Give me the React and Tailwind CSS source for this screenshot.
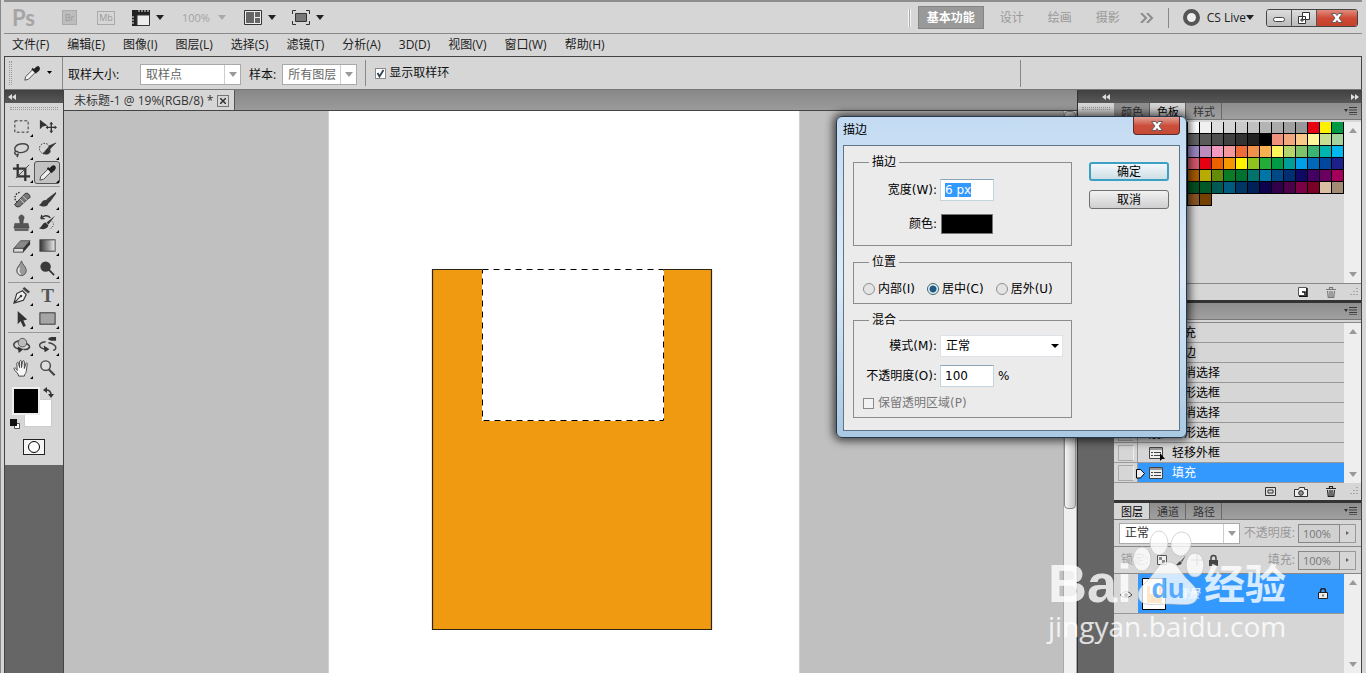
import { useEffect, useRef, useState } from 'react';

const MENUS = ['文件(F)', '编辑(E)', '图像(I)', '图层(L)', '选择(S)', '滤镜(T)', '分析(A)', '3D(D)', '视图(V)', '窗口(W)', '帮助(H)'];

const SWATCHES = [
  '#e60012', '#fff100', '#009944', '#00a0e9', '#1d2088', '#e4007f', '#ffffff', '#f0f0f0', '#dedede', '#d4d4d4', '#cacaca', '#c0c0c0', '#b4b4b4', '#aaaaaa', '#a0a0a0', '#989898', '#e60012', '#fff100', '#009944',
  '#00a0e9', '#1d2088', '#e4007f', '#898989', '#7d7d7d', '#707070', '#626262', '#5a5a5a', '#4e4e4e', '#404040', '#323232', '#222222', '#000000', '#f0917b', '#f3a77c', '#fac98a', '#fff799', '#c5de92', '#a3d39c',
  '#7accc8', '#6dcff6', '#7da7d9', '#8393ca', '#8781bd', '#a186be', '#9b86c0', '#bd8cbf', '#f49ac1', '#f5989d', '#ee6b3a', '#f0914c', '#f9b050', '#fff45c', '#b2d66b', '#80c269', '#3bb371', '#00b5b0', '#00b7ee',
  '#448aca', '#556fb5', '#5f52a0', '#8957a1', '#ae5da1', '#ea68a2', '#d2566b', '#e60012', '#eb6100', '#f39800', '#fff100', '#8fc31f', '#22ac38', '#009944', '#009e96', '#00a0e9', '#0068b7', '#00479d', '#1d2088',
  '#601986', '#920783', '#be0081', '#e4007f', '#e5004f', '#a40000', '#a35a00', '#b7aa00', '#638c0b', '#097c25', '#007130', '#00736d', '#0075a9', '#004986', '#002e73', '#100964', '#440062', '#6a005f', '#a4005b',
  '#a40035', '#7d0000', '#7d3a00', '#7f7200', '#48660a', '#005e15', '#005120', '#005826', '#005952', '#005b7f', '#003663', '#002157', '#0d004c', '#32004b', '#4b0049', '#7b0046', '#7a0026', '#d9c0a3', '#a38a75',
  '#8a7260', '#7a6355', '#c69c6d', '#a67c52', '#8c6239', '#7b5a2e', '#8a5520', '#754100',
];

const HISTORY = ['填充', '描边', '取消选择', '矩形选框', '取消选择', '矩形选框', '轻移外框', '填充'];

const TOOL_GROUPS = [
  [
    ['矩形选框工具', <rect x="3" y="4" width="14" height="12" fill="none" stroke="#333" strokeDasharray="3 2" />],
    ['移动工具', <><path d="M2 3v10l3-3 5-1z" fill="#333" /><path d="M14 6v10M9 11h10" stroke="#333" strokeWidth="1.4" /><path d="M14 5l2 2.500h-4zM14 17l2-2.500h-4zM8 11l2.500-2v4zM20 11l-2.500-2v4z" fill="#333" /></>],
    ['套索工具', <path d="M4 12c-3-4 1-8 7-8 5 0 7 2 6 5s-6 5-10 4c-2-1-3-2-4 0s2 3 3 2 0 2-1 3" fill="none" stroke="#444" strokeWidth="1.500" />],
    ['快速选择工具', <><circle cx="7" cy="9" r="5.500" fill="none" stroke="#222" strokeDasharray="1.500 1.500" /><path d="M19 3l-7 7-2-1 2-3zM11 9c-3 0-3 4-6 5 4 2 8 1 8-3z" fill="#333" stroke="#333" strokeWidth=".6" /></>],
    ['裁剪工具', <><path d="M6 1v13h13M1 6h13v13" fill="none" stroke="#333" strokeWidth="2.400" /><path d="M4 16L18 2" stroke="#444" /></>],
    ['吸管工具', 'dropper'],
  ],
  [
    ['修复画笔工具', <><path d="M8 2.500a6 6 0 0 0-2 11" fill="none" stroke="#222" strokeDasharray="1.500 1.500" strokeWidth="1.400" /><path d="M4 14L14 3.500q3-1 4.500 2T17 9L8 17.500q-3 1-4.500-1T4 14z" fill="#777" stroke="#333" /><path d="M8 9l5 5M11 6l5 5" stroke="#ccc" /></>],
    ['画笔工具', <path d="M19 2l-9 7-2 2 3 3 2-2 6-8zM8 10.500c-4 0-4 4-7 5.500 5 2.500 10 1.500 10-2.500z" fill="#3a3a3a" />],
    ['仿制图章工具', <path d="M10 2a3 3 0 0 1 2 5l-.500 4H17l1 5H2l1-5h5.500L8 7a3 3 0 0 1 2-5zM3 17h14v1.500H3z" fill="#555" stroke="#333" strokeWidth=".5" />],
    ['历史记录画笔工具', <><path d="M3 6c3-4 7-4 10-1M3 6l1-4M3 6l4 0" fill="none" stroke="#333" strokeWidth="1.400" /><path d="M18 3l-9 7 2 2zM8 10c-3 0-4 5-7 6 5 2 9 1 10-3z" fill="#333" /><path d="M15 9c3 3 0 7-3 8" fill="none" stroke="#333" strokeDasharray="1 1.500" /></>],
    ['橡皮擦工具', <><path d="M2 13L9 5h10l-7 8z" fill="#888" stroke="#555" /><path d="M2 13h10v4H1.500z" fill="#ddd" stroke="#444" /><path d="M12 13l7-8v4l-7 8z" fill="#333" /></>],
    ['渐变工具', <><defs><linearGradient id="gradTool"><stop offset="0" stopColor="#333" /><stop offset="1" stopColor="#eee" /></linearGradient></defs><rect x="2" y="4" width="16" height="12" fill="url(#gradTool)" stroke="#444" /></>],
    ['模糊工具', <><path d="M10 2c1 4 5 6 5 10a5 5.500 0 0 1-10 0c0-4 4-6 5-10z" fill="#999" stroke="#555" /><path d="M8 9c-2 3-1 6 1 7" fill="none" stroke="#eee" strokeWidth="1.500" /></>],
    ['加深工具', <><circle cx="8" cy="8" r="5.500" fill="#3a3a3a" /><path d="M11 11l6 6" stroke="#333" strokeWidth="1.800" /></>],
  ],
  [
    ['钢笔工具', <><path d="M2 18L5 8l6-3 4 4-3 6zM2 18l7-7" fill="#eee" stroke="#333" strokeWidth="1.200" /><path d="M11 3l6 5 2-2-6-5z" fill="#444" /><circle cx="9.500" cy="10.500" r="1.300" fill="#333" /></>],
    ['文字工具', <text x="10" y="17" textAnchor="middle" fontFamily="Liberation Serif" fontWeight="bold" fontSize="20" fill="#555">T</text>],
    ['路径选择工具', <path d="M6 2v14l3-3 3 6 2.500-1.500L12 12l4-1z" fill="#333" />],
    ['矩形工具', <rect x="2" y="4" width="16" height="12" fill="#a5a5a5" stroke="#333" />],
  ],
  [
    ['3D 旋转工具', <><circle cx="11" cy="7" r="4.500" fill="#bbb" stroke="#555" /><path d="M7 5c-8 2-6 8 2 9M15 8c7 3 2 7-3 6" fill="none" stroke="#444" strokeWidth="1.700" /><path d="M6 11l6 3-5 4z" fill="#333" /></>],
    ['3D 相机工具', <><path d="M14 1h5v4h-5l-3-1V2z" fill="#333" /><path d="M8 6C-1 7 0 13 9 14M11 7c8 1 10 7 5 8" fill="none" stroke="#444" strokeWidth="1.600" /><path d="M6 10l6 4-5 3z" fill="#333" /></>],
    ['抓手工具', <path d="M6 18c0-3-4-5-5-8 1-1.500 2-.500 3.500 2L4 5c0-2 2-2 2 0l1 4V3c0-2 2-2 2 0v6l1-6c.500-2 2-1.500 2 0v7l1.500-5c.500-1.500 2-1 1.500 1l-1 7c0 2-2 3-2 5z" fill="#f5f5f5" stroke="#444" transform="translate(1 0)" />],
    ['缩放工具', <><circle cx="8" cy="7" r="5" fill="#ddd" stroke="#444" strokeWidth="1.500" /><path d="M11.500 11l6 6" stroke="#444" strokeWidth="2.200" /></>],
  ],
];

function Dropper() {
  return (
    <>
      <path d="M2 18l1-4 8-8 3 3-8 8z" fill="#f0f0f0" stroke="#444" />
      <path d="M10 5l5 5M12 7l2.500-2.500q2-2 3-.500t-.500 3L14.500 9z" fill="#222" stroke="#222" strokeWidth="2" />
    </>
  );
}

function Caret({ className = 'text-[#222]' }) {
  return (
    <svg width="8" height="5" viewBox="0 0 8 5" className={className} aria-hidden="true">
      <path d="M0 0h8L4 5z" fill="currentColor" />
    </svg>
  );
}

function DoubleArrow({ flip }) {
  return (
    <svg width="8" height="6" viewBox="0 0 8 6" className={flip ? 'rotate-180' : ''} aria-hidden="true">
      <path d="M4 0v6L0 3zM8 0v6L4 3z" fill="#ddd" />
    </svg>
  );
}

function CloseGlyph() {
  return (
    <svg width="12" height="10" viewBox="0 0 12 10" aria-hidden="true">
      <path d="M0.500 0.500h4L6 2.500 7.500 0.500h4L8 5l3.500 4.500h-4L6 7.500l-1.500 2h-4L4 5z" fill="#fff" stroke="#555" strokeWidth=".9" />
    </svg>
  );
}

function AppBar() {
  return (
    <header className="flex h-[34px] shrink-0 items-center border-t-2 border-b border-t-[#8d8d8d] border-b-[#8a8a8a] pl-2 pr-1">
      <span className="w-[50px] font-['Lato'] text-[22px] font-bold leading-5 text-[#a5a5a5]">Ps</span>
      <button className="mr-5 h-[15px] w-[15px] border border-[#aaa] bg-[#bdbdbd] text-[9px] leading-3 text-[#999]">Br</button>
      <button className="mr-[17px] h-[14px] w-[18px] border border-[#aaa] text-[9px] leading-3 text-[#999]">Mb</button>
      <button className="mr-[18px] flex items-center gap-[6px]" aria-label="查看额外内容">
        <svg width="18" height="16" viewBox="0 0 18 16"><path d="M0 0h18v5H5v11H0z" fill="#222" /><path d="M5 5h12.500v10.500H5z" fill="#ececec" stroke="#333" /><path d="M7 0v2M10 0v2M13 0v2M16 0v2M0 7h2M0 10h2M0 13h2" stroke="#eee" /></svg>
        <Caret />
      </button>
      <button className="mr-[18px] flex items-center gap-2 text-[11px] text-[#a2a2a2]">100%<Caret className="text-[#aaa]" /></button>
      <button className="mr-[16px] flex items-center gap-[6px]" aria-label="排列文档">
        <svg width="18" height="15" viewBox="0 0 18 15"><path d="M.5.5h17v14H.5z" fill="#eee" stroke="#333" /><path d="M2 2h8v11H2zM11 2h5v5h-5zM11 8h5v5h-5z" fill="#666" /></svg>
        <Caret />
      </button>
      <button className="flex items-center gap-[6px]" aria-label="屏幕模式">
        <svg width="18" height="15" viewBox="0 0 18 15"><path d="M.5 4V.5H4M14 .5h3.500V4M17.500 11v3.500H14M4 14.500H.5V11" fill="none" stroke="#333" /><path d="M3.500 3.500h11v8h-11z" fill="#777" stroke="#333" /></svg>
        <Caret />
      </button>
      <div className="ml-auto mr-[7px] h-[18px] w-[3px] border-x border-[#f5f5f5] bg-[#aaa]" />
      <nav className="flex items-center gap-6 text-[12px] text-[#999]">
        <button className="-mr-2 h-[23px] border border-[#858585] bg-[#999] px-2 font-bold text-white">基本功能</button>
        <button>设计</button>
        <button>绘画</button>
        <button>摄影</button>
        <button className="-ml-1" aria-label="更多工作区">
          <svg width="14" height="10" viewBox="0 0 14 10"><path d="M1 0l5 5-5 5M7 0l5 5-5 5" fill="none" stroke="#8c8c8c" strokeWidth="2" /></svg>
        </button>
      </nav>
      <div className="ml-[14px] mr-[14px] h-5 w-px bg-[#888]" />
      <button className="mr-3 flex items-center text-[12px] text-[#222]">
        <svg width="17" height="17" viewBox="0 0 17 17" className="mr-[7px]"><circle cx="8.500" cy="8.500" r="6.500" fill="#eee" stroke="#555" strokeWidth="4" /></svg>
        <span>CS Live</span>
        <Caret />
      </button>
      <div className="flex h-[18px] overflow-hidden rounded-[3px] border border-[#444]">
        <button aria-label="最小化" className="flex w-[25px] items-center justify-center border-r border-[#555] bg-linear-to-b from-[#ddd] to-[#bbb]"><span className="mt-1 h-[5px] w-3 rounded-sm border border-[#444] bg-white" /></button>
        <button aria-label="还原" className="flex w-[25px] items-center justify-center border-r border-[#555] bg-linear-to-b from-[#ddd] to-[#bbb]">
          <svg width="12" height="12" viewBox="0 0 12 12"><path d="M4.500.5h7v7h-7zM.5 4.500h7v7h-7z" fill="#fff" stroke="#333" /><path d="M3 7h2v2H3z" fill="#ccc" stroke="#333" /></svg>
        </button>
        <button aria-label="关闭" className="flex w-10 items-center justify-center bg-linear-to-b from-[#e08a7c] via-[#cf4a36] to-[#c4412a]"><CloseGlyph /></button>
      </div>
    </header>
  );
}

function OptionsBar() {
  return (
    <section className="flex h-[34px] shrink-0 items-center border border-[#444] border-b-[#777] pl-1">
      <div className="h-6 w-[3px] border-x border-dotted border-[#999]" />
      <button className="ml-[11px] flex items-center gap-[6px]" aria-label="当前工具">
        <svg width="18" height="18" viewBox="0 0 20 20"><Dropper /></svg>
        <svg width="5" height="4" viewBox="0 0 5 4"><path d="M0 0h5L2.500 3z" /></svg>
      </button>
      <div className="ml-[10px] h-8 w-px bg-[#888]" />
      <div className="flex items-center pt-[3px]">
        <label htmlFor="sampleSize" className="ml-[5px] w-[72px]">取样大小:</label>
        <FlatSelect id="sampleSize" className="w-[101px]" value="取样点" disabled />
        <label htmlFor="sampleLayer" className="ml-2 mr-[6px]">样本:</label>
        <FlatSelect id="sampleLayer" className="w-[75px]" value="所有图层" disabled />
      </div>
      <div className="ml-2 h-[26px] w-px bg-[#888]" />
      <label className="ml-[9px] flex items-center gap-[3px]">
        <Check defaultChecked />
        显示取样环
      </label>
      <div className="ml-auto mr-[340px] h-[27px] w-px bg-[#888]" />
    </section>
  );
}

function Check(props) {
  return (
    <span className="relative flex h-[11px] w-[11px]">
      <input type="checkbox" className="peer h-[11px] w-[11px] appearance-none border border-[#8a8a8a] bg-white disabled:bg-[#f3f3f3]" {...props} />
      <svg viewBox="0 0 11 11" className="pointer-events-none absolute inset-0 hidden peer-checked:block"><path d="M2.500 5l2 3.500L8.500 2" fill="none" stroke="#345" strokeWidth="1.800" /></svg>
    </span>
  );
}

function FlatSelect({ id, className, value, disabled }) {
  return (
    <span className={`relative flex h-[21px] ${className}`}>
      <select id={id} disabled={disabled} defaultValue={value} className="w-full appearance-none border border-[#aaa] bg-white pl-[5px] text-[12px] leading-4 text-[#333] opacity-100 disabled:text-[#666]">
        <option>{value}</option>
      </select>
      <span className="pointer-events-none absolute inset-y-px right-px flex w-4 items-center justify-center border-l border-[#ccc] bg-white">
        <Caret className="text-[#999]" />
      </span>
    </span>
  );
}

function Toolbox() {
  const [tool, setTool] = useState('吸管工具');
  return (
    <aside className="flex w-[60px] shrink-0 flex-col border-x border-[#444] bg-[#666]">
      <div className="flex h-[13px] shrink-0 items-center bg-linear-to-b from-[#404040] to-[#585858] pl-[3px]"><DoubleArrow /></div>
      <div className="flex flex-col bg-[#d6d6d6] px-[3px]">
        <div className="mx-[2px] mt-1 mb-[5px] h-[3px] border-y border-dotted border-[#999]" />
        {TOOL_GROUPS.map((group, i) => (
          <div key={i}>
            {i > 0 && <div className="flex h-1 items-center"><div className="h-px w-full bg-[#999]" /></div>}
            <div className="grid grid-cols-2">
              {group.map(([name, icon]) => (
                <button
                  key={name}
                  title={name}
                  onClick={() => setTool(name)}
                  className={`relative flex h-[23px] items-center justify-center rounded-[3px] border ${tool === name ? 'border-[#555] bg-[#c2c2c2]' : 'border-transparent'}`}
                >
                  <svg width="19" height="19" viewBox="0 0 20 20">{icon === 'dropper' ? <Dropper /> : icon}</svg>
                  {name !== '移动工具' && name !== '缩放工具' && (
                    <svg width="3" height="3" viewBox="0 0 3 3" className="absolute bottom-0 right-0"><path d="M3 0v3H0z" /></svg>
                  )}
                </button>
              ))}
            </div>
          </div>
        ))}
        <div className="relative ml-1 mt-[7px] h-11 w-11">
          <button aria-label="背景色" className="absolute left-3 top-3 h-7 w-7 border border-[#ccc] bg-white" />
          <button aria-label="前景色" className="absolute left-0 top-0 h-7 w-7 border-2 border-[#eee] bg-black" />
          <svg className="absolute left-[31px] top-0" width="11" height="11" viewBox="0 0 11 11"><path d="M3 3q5 0 5 5" fill="none" stroke="#333" strokeWidth="1.500" /><path d="M4 0v6L0 3zM5 7h6l-3 4z" fill="#333" /></svg>
          <svg className="absolute -left-[2px] top-8" width="11" height="11" viewBox="0 0 11 11"><path d="M4.500 4.500h5v5h-5z" fill="#fff" stroke="#555" /><path d="M0 0h7v7H0z" fill="#111" /></svg>
        </div>
        <button aria-label="以快速蒙版模式编辑" className="mx-auto mb-[10px] mt-2 flex h-4 w-[22px] items-center justify-center border border-[#222] bg-[#f5f5f5]">
          <span className="h-3 w-3 rounded-full border border-black bg-white" />
        </button>
      </div>
    </aside>
  );
}

function DocumentArea() {
  return (
    <main className="flex min-w-0 flex-1 flex-col">
      <div className="flex h-[21px] shrink-0 border-b border-[#444] bg-linear-to-b from-[#888] to-[#9b9b9b]">
        <div className="flex items-center gap-1 border-r border-[#555] bg-[#d6d6d6] pl-[10px] pr-[5px] pt-[2px] text-[12px] text-[#333]">
          <span>未标题-1 @ 19%(RGB/8) *</span>
          <button aria-label="关闭文档" className="flex h-3 w-3 items-center justify-center border border-[#777]">
            <svg width="6" height="6" viewBox="0 0 6 6"><path d="M0 0l6 6M6 0L0 6" stroke="#333" strokeWidth="1.500" /></svg>
          </button>
        </div>
      </div>
      <div className="flex min-h-0 flex-1 bg-[#c0c0c0]">
        <div className="flex flex-1 justify-center">
          <div className="w-[472px] border-x border-[#d0d0d0] bg-white">
            <svg width="470" height="562" viewBox="0 0 470 562">
              <path d="M103.500 158.500h50v151h181v-151h48v360h-279z" fill="#f09a12" />
              <path d="M153.500 158.500h-50v360h279v-360h-48" fill="none" stroke="#2c2410" strokeWidth="1.200" />
              <rect x="153.500" y="158.500" width="181" height="151" fill="#fff" stroke="#fff" />
              <rect x="153.500" y="158.500" width="181" height="151" fill="none" stroke="#000" strokeDasharray="6 5" />
            </svg>
          </div>
        </div>
        <div className="w-[14px] border-x border-[#aaa] bg-[#f0f0f0]">
          <div className="h-[398px] rounded-sm border border-[#888] bg-linear-to-r from-[#f5f5f5] to-[#c4c4c4]" />
        </div>
      </div>
    </main>
  );
}

function PanelTabs({ tabs, active }) {
  return (
    <div className="flex h-[17px] shrink-0 items-center border-b border-[#777] bg-linear-to-b from-[#8e8e8e] to-[#a0a0a0] pr-1 text-[11px] text-[#333]">
      {tabs.map((t) => (
        <button key={t} className={`h-full border-r border-[#666] pl-[7px] pr-[6px] pt-px leading-4 ${t === active ? 'bg-[#d6d6d6] text-black' : ''}`}>{t}</button>
      ))}
      <svg className="ml-auto" width="13" height="8" viewBox="0 0 13 8"><path d="M0 2h4L2 5z" fill="#333" /><path d="M5 .5h8M5 3h8M5 5.500h8M5 7.800h8" stroke="#333" strokeWidth=".9" /></svg>
    </div>
  );
}

function Scroll() {
  return (
    <div className="flex w-[17px] shrink-0 flex-col items-center justify-between bg-[#eee] py-[6px]">
      <Caret className="rotate-180 text-[#999]" />
      <Caret className="text-[#999]" />
    </div>
  );
}

function Trash({ dark }) {
  return (
    <svg width="10" height="11" viewBox="0 0 10 11">
      <path d="M0 2.500h10M3.500 2V.5h3V2M1.500 4l.8 6.500h5.400L8.500 4M4 4v6M6 4v6" fill="none" stroke={dark ? '#222' : '#777'} strokeWidth="1.200" />
    </svg>
  );
}

function Grip() {
  return (
    <svg width="10" height="10" viewBox="0 0 10 10"><path d="M9 1v9M6 4v6M3 7v3" stroke="#888" strokeWidth="1.200" strokeDasharray="1 2" /></svg>
  );
}

function SwatchesPanel() {
  return (
    <section className="flex h-[197px] shrink-0 flex-col bg-[#d6d6d6]">
      <PanelTabs tabs={['颜色', '色板', '样式']} active="色板" />
      <div className="mt-[2px] flex min-h-0 flex-1 pl-[2px]">
        <div className="grid flex-1 grid-cols-[repeat(19,12px)] content-start">
          {SWATCHES.map((c, i) => (
            <button key={i} aria-label={c} className="h-3 border-r border-b border-black" style={{ backgroundColor: c }} />
          ))}
        </div>
        <Scroll />
      </div>
      <div className="flex h-[17px] items-center justify-end gap-[18px] border-t border-[#888] pr-[3px]">
        <svg width="10" height="10" viewBox="0 0 10 10"><path d="M.5.5h8v8h-8z" fill="#fff" stroke="#555" /><path d="M9 1v8.500H1M4 5h3v3" fill="none" stroke="#111" strokeWidth="1.500" /></svg>
        <div className="flex gap-3"><Trash /><Grip /></div>
      </div>
    </section>
  );
}

function HistoryPanel() {
  return (
    <section className="flex h-[197px] shrink-0 flex-col bg-[#d6d6d6]">
      <PanelTabs tabs={['历史记录']} active="历史记录" />
      <div className="mt-[2px] flex min-h-0 border-t border-[#888]">
        <ul className="flex-1">
          {HISTORY.map((step, i) => {
            const current = i === HISTORY.length - 1;
            return (
              <li key={i} className="flex h-5 border-b border-[#999]">
                <span className="flex w-6 items-center justify-center border-r border-[#999]"><span className="h-4 w-4 border border-[#aaa] border-r-[#eee]" /></span>
                <button className={`flex flex-1 items-center text-left text-[12px] ${current ? 'bg-[#3399ff] text-white' : 'text-black'}`}>
                  <svg width="34" height="18" viewBox="0 0 34 18" className="overflow-visible">
                    {current && <path d="M-1.500 5.500h4l4 4-4 4.500h-4z" fill="#eee" stroke="#000" />}
                    {step.endsWith('选框')
                      ? <rect x="11.500" y="4.500" width="13" height="10" fill="none" stroke="#333" strokeDasharray="3 2" />
                      : <><path d="M11.500 3.500h13v11h-13z" fill="#eee" stroke="#444" /><path d="M12 5h12M13 8.500h2M16 8.500h7M13 11.500h2M16 11.500h7" stroke="#444" /></>}
                    {step === '轻移外框' && <path d="M22 9v8l2-2h3z" />}
                  </svg>
                  {step}
                </button>
              </li>
            );
          })}
        </ul>
        <Scroll />
      </div>
      <div className="flex flex-1 items-center justify-end gap-[18px] pr-[3px]">
        <svg width="11" height="9" viewBox="0 0 11 9"><path d="M.5.5h10v8H.5zM3 3h5v3H3z" fill="#ddd" stroke="#333" /></svg>
        <svg width="14" height="10" viewBox="0 0 14 10"><path d="M.5 2.500h4l1-2h5v2h3v7H.5z" fill="#eee" stroke="#333" /><circle cx="7" cy="6" r="2.300" fill="#999" stroke="#222" /></svg>
        <div className="flex gap-3"><Trash dark /><Grip /></div>
      </div>
    </section>
  );
}

function PercentField({ id, label }) {
  return (
    <div className="flex items-center text-[#999]">
      <label htmlFor={id} className="mr-[3px]">{label}</label>
      <input id={id} disabled defaultValue="100%" className="h-[19px] w-[42px] border border-[#888] bg-[#d0d0d0] pl-1 text-[11px] text-[#777]" />
      <button aria-label={`${label}滑块`} className="flex h-[19px] w-4 items-center justify-center border border-l-0 border-[#999]">
        <svg width="3" height="4" viewBox="0 0 3 4"><path d="M0 0l3 2-3 2z" fill="#666" /></svg>
      </button>
    </div>
  );
}

function LayersPanel() {
  return (
    <section className="flex min-h-0 flex-1 flex-col bg-[#d6d6d6]">
      <PanelTabs tabs={['图层', '通道', '路径']} active="图层" />
      <div className="flex h-[27px] shrink-0 items-center justify-between border-b border-[#888] pl-[5px] pr-[5px]">
        <FlatSelect id="layerMode" value="正常" className="w-[121px]" />
        <PercentField id="layerOpacity" label="不透明度:" />
      </div>
      <div className="flex h-[27px] shrink-0 items-center justify-between border-b border-[#888] pl-[7px] pr-[5px] text-[#999]">
        <div className="flex items-center gap-2">
          <span>锁定:</span>
          <svg width="62" height="12" viewBox="0 0 62 12"><path d="M1.500 1.500h9v9h-9z" fill="#eee" stroke="#555" /><path d="M3 3h3v3H3zM6 6h3v3H6z" fill="#888" /><path d="M30 1l-5 6 1 1zM24 7l-4 4q4 1 6-2z" fill="#444" /><path d="M41 0v12M35 6h12" stroke="#777" /><path d="M53 6h9v6h-9z" fill="#444" /><path d="M55 6V4a2.500 2.500 0 0 1 5 0v2" fill="none" stroke="#444" strokeWidth="1.500" /></svg>
        </div>
        <PercentField id="layerFill" label="填充:" />
      </div>
      <div className="flex min-h-0 flex-1">
        <div className="flex-1">
          <div className="flex h-10 border-b border-[#999]">
            <button aria-label="图层可见性" className="flex w-6 items-center justify-center">
              <svg width="14" height="10" viewBox="0 0 14 10"><path d="M1 6q6-7 12 0-6 5-12 0z" fill="#eee" stroke="#444" /><circle cx="7" cy="6" r="2" /></svg>
            </button>
            <button className="flex flex-1 items-center bg-[#3399ff] pl-1 pr-4 text-left italic text-white">
              <svg width="24" height="32" viewBox="0 0 24 32" className="mr-[10px]"><path d="M.5.5h23v31H.5z" fill="#fff" stroke="#000" /><path d="M5 8h3v8h9V8h3v17H5z" fill="#f09a12" /></svg>
              背景
              <svg width="10" height="11" viewBox="0 0 10 11" className="ml-auto"><path d="M2.500 5V3a2.500 2.500 0 0 1 5 0v2" fill="none" stroke="#222" strokeWidth="1.500" /><path d="M.5 4.500h9v6h-9z" fill="#eee" stroke="#222" /><path d="M4.500 6.500h1v2h-1z" /></svg>
            </button>
          </div>
        </div>
        <Scroll />
      </div>
    </section>
  );
}

function StrokeDialog() {
  const [position, setPosition] = useState('居中(C)');
  const widthRef = useRef(null);

  useEffect(() => {
    widthRef.current.focus();
    widthRef.current.select();
  }, []);

  const field = 'h-[22px] border border-[#c5d5e0] border-t-[#8aa5ba] bg-white px-1 text-[12px] text-black outline-none';
  const rowLabel = 'w-[83px] text-right';

  return (
    <div role="dialog" aria-label="描边" className="absolute right-[179px] top-[116px] w-[351px] rounded-md border border-[#27384a] bg-linear-to-b from-[#c3dbf2] via-[#dcebf8] to-[#a9c8e2] px-[6px] pb-[6px] font-['DejaVu_Sans','Noto_Sans_CJK_SC',sans-serif] text-[12px] leading-4 text-black shadow-[0_0_9px_3px_rgba(0,0,0,0.65)]">
      <div className="flex h-[28px] items-start justify-between">
        <h2 className="pt-[5px]">描边</h2>
        <button aria-label="关闭" className="flex h-[18px] w-[47px] items-center justify-center rounded-b-[4px] border border-t-0 border-[#5b2a2a] bg-linear-to-b from-[#dfa096] via-[#cc4f3d] to-[#c54a35]"><CloseGlyph /></button>
      </div>
      <div className="flex gap-[17px] border border-[#5d7388] bg-[#ebebeb] pb-3 pl-[9px] pt-2">
        <div className="flex w-[219px] flex-col gap-2">
          <fieldset className="border border-[#8c8c8c]">
            <legend className="ml-[15px] px-[3px]">描边</legend>
            <div className="flex flex-col gap-[13px] pb-[11px] pt-[9px]">
              <div className="flex items-center gap-[3px]">
                <label htmlFor="strokeWidth" className={rowLabel}>宽度(W):</label>
                <input id="strokeWidth" ref={widthRef} defaultValue="6 px" className={`${field} w-[54px] selection:bg-[#3399ff] selection:text-white`} />
              </div>
              <div className="flex items-center gap-1">
                <span className={rowLabel}>颜色:</span>
                <button aria-label="颜色" className="h-5 w-[52px] border border-[#777] bg-black" />
              </div>
            </div>
          </fieldset>
          <fieldset className="border border-[#8c8c8c]">
            <legend className="ml-[15px] px-[3px]">位置</legend>
            <div className="flex gap-3 pb-[6px] pl-[9px] pt-[11px]">
              {['内部(I)', '居中(C)', '居外(U)'].map((p) => (
                <label key={p} className="flex items-center gap-[3px]">
                  <input
                    type="radio"
                    name="position"
                    checked={position === p}
                    onChange={() => setPosition(p)}
                    className="h-3 w-3 appearance-none rounded-full border border-[#8e8f8f] bg-[#e4e4e4] checked:border-[#466] checked:bg-[radial-gradient(circle,#1d5a85_0_3px,#e8f2f8_4px)]"
                  />
                  {p}
                </label>
              ))}
            </div>
          </fieldset>
          <fieldset className="border border-[#8c8c8c]">
            <legend className="ml-[15px] px-[3px]">混合</legend>
            <div className="flex flex-col gap-2 pb-[6px] pt-[7px]">
              <div className="flex items-center gap-[3px]">
                <label htmlFor="blendMode" className={rowLabel}>模式(M):</label>
                <span className="relative">
                  <select id="blendMode" className="block h-[22px] w-[123px] appearance-none border border-[#dde3e8] bg-white pl-[5px] text-[12px]">
                    <option>正常</option>
                    <option>溶解</option>
                    <option>正片叠底</option>
                  </select>
                  <svg className="pointer-events-none absolute right-1 top-[9px]" width="8" height="4" viewBox="0 0 8 4"><path d="M0 0h8L4 4z" /></svg>
                </span>
              </div>
              <div className="flex items-center gap-[3px]">
                <label htmlFor="blendOpacity" className={rowLabel}>不透明度(O):</label>
                <input id="blendOpacity" defaultValue="100" className={`${field} w-[54px]`} />
                <span className="pl-[1px]">%</span>
              </div>
              <label className="flex items-center gap-1 pl-[9px] text-[#777]">
                <Check disabled />
                保留透明区域(P)
              </label>
            </div>
          </fieldset>
        </div>
        <div className="flex w-20 flex-col gap-[9px] pt-2">
          <button className="h-[19px] rounded-[3px] border-2 border-[#3c9fc4] bg-linear-to-b from-[#f2f8fb] to-[#cfdfe6] leading-4">确定</button>
          <button className="h-[19px] rounded-[3px] border border-[#707070] bg-linear-to-b from-[#f2f2f2] to-[#cfcfcf] leading-4">取消</button>
        </div>
      </div>
    </div>
  );
}

function Watermark() {
  return (
    <div className="pointer-events-none absolute bottom-[29px] right-[74px] w-[244px] text-white/80">
      <div className="flex h-[78px] items-end">
        <span className="font-['Liberation_Sans'] text-[54px] font-bold leading-[50px]">Bai</span>
        <svg width="86" height="78" viewBox="0 0 86 78" className="-ml-[10px] -mr-1 shrink-0">
          <g fill="#fff" fillOpacity=".78" stroke="#bbb" strokeOpacity=".6">
            <ellipse cx="20" cy="29" rx="9" ry="12" />
            <ellipse cx="37" cy="13" rx="9" ry="12" />
            <ellipse cx="59" cy="14" rx="10" ry="12" transform="rotate(12 59 14)" />
            <ellipse cx="73" cy="35" rx="9" ry="12" />
            <path d="M46 32c10 0 12 10 19 17 8 8 13 12 10 20-4 8-15 5-29 5s-25 3-29-5c-3-8 2-12 10-20 7-7 9-17 19-17z" />
          </g>
          <text x="46" y="68" textAnchor="middle" fontFamily="Liberation Sans" fontWeight="bold" fontSize="27" fill="#3399ff" fillOpacity=".8">du</text>
        </svg>
        <span className="shrink-0 text-[41px] font-bold leading-[50px]">经验</span>
      </div>
      <div className="text-[28px] leading-[36px]">jingyan.baidu.com</div>
    </div>
  );
}

export default function App() {
  return (
    <div className="relative flex h-screen flex-col overflow-hidden border-l border-[#888] bg-[#d6d6d6] pl-[3px] pr-[4px] font-['Open_Sans','Noto_Sans_CJK_SC',sans-serif] text-[12px] leading-4 text-[#111]">
      <AppBar />
      <nav className="flex h-[22px] shrink-0 items-center gap-[18px] pl-2 text-[#222]">
        {MENUS.map((m) => <button key={m}>{m}</button>)}
      </nav>
      <OptionsBar />
      <div className="flex min-h-0 flex-1">
        <Toolbox />
        <DocumentArea />
        <div className="flex w-[37px] shrink-0 flex-col border-l border-[#333] bg-[#666]">
          <div className="flex h-[13px] items-center justify-end bg-linear-to-b from-[#404040] to-[#585858] pr-1"><DoubleArrow /></div>
          <div className="h-[60px] bg-[#d6d6d6] px-1 pt-1"><div className="h-[3px] border-y border-dotted border-[#999]" /></div>
        </div>
        <aside className="flex w-[248px] shrink-0 flex-col border-r border-[#444] bg-[#333]">
          <div className="flex h-[13px] shrink-0 items-center justify-end bg-linear-to-b from-[#404040] to-[#585858] pr-[2px]"><DoubleArrow flip /></div>
          <div className="flex min-h-0 flex-1 flex-col gap-[3px]">
            <SwatchesPanel />
            <HistoryPanel />
            <LayersPanel />
          </div>
        </aside>
      </div>
      <StrokeDialog />
      <Watermark />
    </div>
  );
}
